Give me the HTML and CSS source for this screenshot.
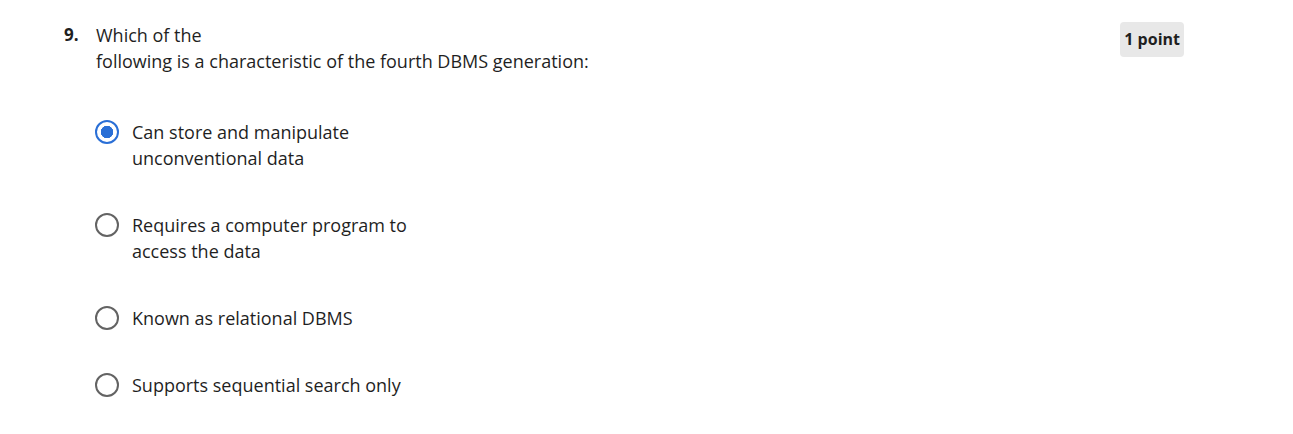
FILE: index.html
```html
<!DOCTYPE html>
<html lang="en">
<head>
<meta charset="utf-8">
<title>Question 9</title>
<link rel="stylesheet" href="styles.css">
</head>
<body>
<div class="question">
  <div class="header">
    <div class="number">9.</div>
    <div class="prompt">Which of the<br>following is a characteristic of the fourth DBMS generation:</div>
    <div class="points">1 point</div>
  </div>
  <div class="options">
    <label class="option">
      <span class="radio checked"></span>
      <span class="label">Can store and manipulate<br>unconventional data</span>
    </label>
    <label class="option">
      <span class="radio"></span>
      <span class="label">Requires a computer program to<br>access the data</span>
    </label>
    <label class="option">
      <span class="radio"></span>
      <span class="label">Known as relational DBMS</span>
    </label>
    <label class="option">
      <span class="radio"></span>
      <span class="label">Supports sequential search only</span>
    </label>
  </div>
</div>
</body>
</html>
```

FILE: styles.css
```css
* { box-sizing: border-box; }
html, body { margin: 0; padding: 0; background: #ffffff; }
body {
  font-family: "Open Sans", "Noto Sans", "DejaVu Sans", sans-serif;
  color: #1f1f1f;
  font-size: 18px;
  line-height: 26px;
}
.question {
  padding: 22px 0 0 64px;
  width: 1184px;
}
.header {
  display: flex;
  align-items: flex-start;
}
.number {
  width: 32px;
  font-weight: 700;
  font-size: 17px;
}
.prompt {
  flex: 1;
}
.points {
  background: #e8e8e8;
  border-radius: 4px;
  font-weight: 700;
  font-size: 16px;
  line-height: 21px;
  padding: 7px 4px;
  color: #1f1f1f;
}
.options {
  display: flex;
  flex-direction: column;
  gap: 41px;
  padding: 45px 0 0 31px;
}
.option {
  display: flex;
  align-items: flex-start;
  gap: 13px;
}
.radio {
  width: 24px;
  height: 24px;
  border-radius: 50%;
  border: 2px solid #636363;
  flex: none;
  margin-top: 1px;
  background: #fff;
}
.radio.checked {
  border-color: #2a6fd6;
  background: radial-gradient(circle, #2a6fd6 0 6px, #fff 6.5px);
}
```
